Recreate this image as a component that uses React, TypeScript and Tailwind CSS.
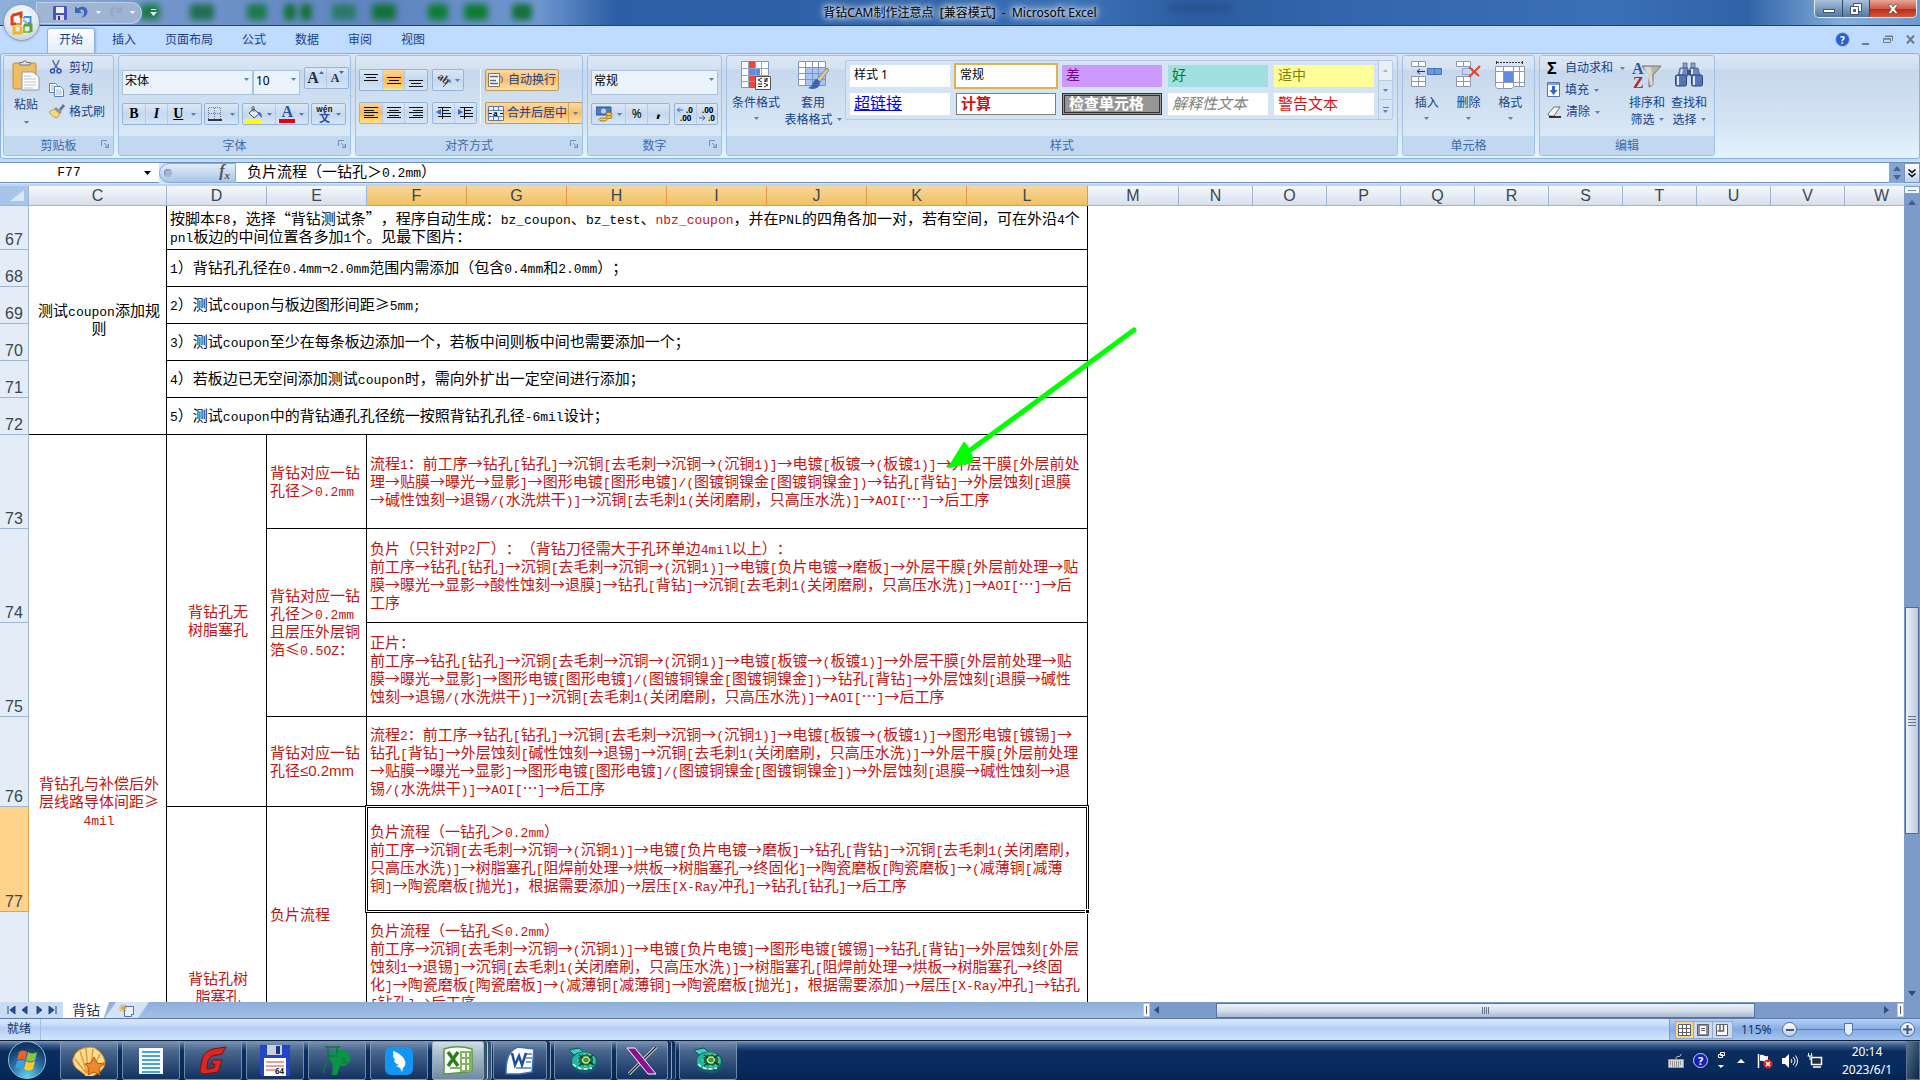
import type { ReactNode } from "react";
import clsx from "clsx";

const ui = "font-['Noto_Sans','Noto_Sans_CJK_SC',sans-serif]";
const song = "font-['Noto_Sans_CJK_SC',sans-serif] [text-spacing-trim:space-all]";

/* ---------- small helpers ---------- */

function Caret({ className }: { className?: string }) {
  return (
    <svg width="5" height="3" viewBox="0 0 5 3" className={clsx("shrink-0", className)}>
      <path d="M0 0h5L2.5 3z" fill="#5b7fb3" />
    </svg>
  );
}

// Latin runs are set in a fixed pitch face, everything else stays full width
function Mixed({ text }: { text: string }) {
  const parts = text.split(/([\x20-\x7e]+)/);
  return (
    <>
      {parts.map((p, i) =>
        i % 2 === 1 ? (
          <span key={i} className="font-['Liberation_Mono',monospace] text-[13px]">
            {p}
          </span>
        ) : (
          p
        )
      )}
    </>
  );
}

function Lines({ lines }: { lines: string[] }) {
  return (
    <>
      {lines.map((line, i) => (
        <div key={i} className="h-[18px] whitespace-pre">
          <Mixed text={line} />
        </div>
      ))}
    </>
  );
}

/* ---------- title bar ---------- */

const smudges = [
  "left-[140px] w-5 bg-[#1c7a4a]",
  "left-[190px] w-6 bg-[#1f6e50]",
  "left-[247px] w-5 bg-[#1c7a4a]",
  "left-[284px] w-3 bg-[#157038]",
  "left-[300px] w-3 bg-[#157038]",
  "left-[332px] w-6 bg-[#2a7a66]",
  "left-[372px] w-6 bg-[#157038]",
  "left-[428px] w-5 bg-[#0f7c35]",
  "left-[464px] w-6 bg-[#0f7c35]",
  "left-[512px] w-5 bg-[#157038]",
];

function TitleBar() {
  return (
    <header className="relative flex h-[26px] shrink-0 items-center overflow-hidden border-b border-[#1f4668] bg-[linear-gradient(90deg,#8fb0da_0%,#7596cc_8%,#5d84bf_20%,#6f97cf_28%,#2c5fa5_32%,#2f63a8_48%,#3c72b8_56%,#2b5ca0_62%,#3468ae_72%,#3a70b6_84%,#2f63a8_91%,#86aedb_96%,#6d9acc_100%)]">
      {smudges.map((s) => (
        <span key={s} className={clsx("absolute top-1 h-4 rounded-sm blur-[3px]", s)} />
      ))}
      <span className="absolute left-[1168px] top-1 h-2 w-16 bg-[#24487c] opacity-50 blur-[3px]" />
      <div className="relative ml-9 flex h-[22px] w-[106px] items-center rounded-r-full border border-[#c9dcf2]/70 bg-[#a3b7d3]/90 pl-4">
        <button aria-label="保存">
          <svg width="14" height="14" viewBox="0 0 14 14">
            <path d="M1 0h12l1 1v12l-1 1H1l-1-1V1z" fill="#4a54b8" />
            <path d="M3 1h8v6H3z" fill="#eef3fb" />
            <path d="M3 9h8v5H3z" fill="#d6dcea" />
            <path d="M5 10h2v4H5z" fill="#33397f" />
          </svg>
        </button>
        <button aria-label="撤消" className="ml-2">
          <svg width="13" height="13" viewBox="0 0 13 13">
            <path d="M0 0v7h7L4.500 4.500C7 2.500 9.500 4 9 7c0 2-1 3.500-3 5 4-1 6.500-3 6.500-6.500C12.500 1 6.500-1 2.500 2.500z" fill="#3c66c0" />
          </svg>
        </button>
        <svg width="5" height="3" className="ml-2"><path d="M0 0h5L2.500 3z" fill="#fff" /></svg>
        <button aria-label="恢复" className="ml-2">
          <svg width="13" height="13" viewBox="0 0 13 13" className="-scale-x-100 opacity-50">
            <path d="M0 0v7h7L4.500 4.500C7 2.500 9.500 4 9 7c0 2-1 3.500-3 5 4-1 6.500-3 6.500-6.500C12.500 1 6.500-1 2.500 2.500z" fill="#8b9fbd" />
          </svg>
        </button>
        <svg width="5" height="3" className="ml-2"><path d="M0 0h5L2.500 3z" fill="#fff" /></svg>
      </div>
      <svg width="7" height="7" viewBox="0 0 7 7" className="relative ml-2">
        <path d="M1 0h5v1H1zM0 3h7L3.500 7z" fill="#e8f0fa" />
      </svg>
      <h1 className="absolute inset-x-0 top-[5px] whitespace-pre text-center text-xs leading-4 text-black [text-shadow:0_0_5px_#fff,0_0_8px_#fff,0_0_10px_#dce8f8]">
        背钻CAM制作注意点  [兼容模式]  -  Microsoft Excel
      </h1>
      <div className="relative mr-[3px] ml-auto flex h-[18px] self-start overflow-hidden rounded-b-[5px] border border-t-0 border-[#e2edf8]">
        <button aria-label="最小化" className="flex w-7 items-end justify-center border-r border-[#2d4a73] bg-linear-to-b from-[#a9c1dd] to-[#54769f] pb-1">
          <span className="h-[4px] w-3 border border-[#3f5573] bg-white" />
        </button>
        <button aria-label="还原" className="flex w-[27px] items-center justify-center border-r border-[#2d4a73] bg-linear-to-b from-[#a9c1dd] to-[#54769f]">
          <svg width="12" height="12" viewBox="0 0 12 12">
            <path d="M3.500.5h8v8h-8z" fill="#fff" stroke="#3f5573" />
            <path d="M.5 3.500h8v8h-8z" fill="#fff" stroke="#3f5573" />
            <path d="M3.500 6.500h2v2h-2z" fill="#54769f" stroke="#3f5573" />
          </svg>
        </button>
        <button aria-label="关闭" className="flex w-[46px] items-center justify-center bg-[linear-gradient(#e6a79a,#cf5a46_50%,#b92b18_52%,#d4563c)]">
          <svg width="12" height="10" viewBox="0 0 12 10">
            <path d="M1 .5h3L6 3 8 .5h3L7.700 5 11 9.500H8L6 7 4 9.500H1L4.300 5z" fill="#fff" stroke="#5b4048" strokeWidth=".6" />
          </svg>
        </button>
      </div>
    </header>
  );
}

function OfficeButton() {
  return (
    <button aria-label="Office 按钮" className="absolute left-[3px] top-1 z-10 flex size-[37px] items-center justify-center rounded-full border border-[#8a9fba] bg-[radial-gradient(circle_at_50%_35%,#ffffff,#dfe7f1_55%,#b3c2d8)] shadow">
      <svg width="24" height="24" viewBox="0 0 24 24" fill="none">
        <path d="M2 4.500 11 2v5M2 4.500v8.500h4" stroke="#d9431e" strokeWidth="3" />
        <path d="M6 13h5V7" stroke="#ee8a3c" strokeWidth="2" />
        <path d="M14 6h6.500v6h-3" stroke="#3f8fd8" strokeWidth="2" />
        <path d="M14 6v5h4" stroke="#6db5ea" strokeWidth="2" strokeDasharray="2 1" />
        <path d="M4 15v7h7v-6" stroke="#f2b51d" strokeWidth="3" />
        <path d="M4 15h7" stroke="#f8d35a" strokeWidth="2" />
        <path d="M14 14v7h7" stroke="#8cc152" strokeWidth="2" />
        <path d="M14 14h7v7" stroke="#5f9e35" strokeWidth="3" />
      </svg>
    </button>
  );
}

const menuTabs = ["开始", "插入", "页面布局", "公式", "数据", "审阅", "视图"];

function TabStrip() {
  return (
    <nav className="flex h-[27px] shrink-0 items-end gap-[5px] bg-[#bfdbff] pl-[47px] pr-[5px]">
      {menuTabs.map((t, i) => (
        <button
          key={t}
          className={clsx(
            "h-[25px] px-3 pb-[2px] text-xs text-[#15428b]",
            i === 0 && "rounded-t-[3px] border border-b-0 border-[#8db2e3] bg-linear-to-b from-white to-[#e0ecf9] px-[11px] shadow-[1px_0_2px_#8db2e3]"
          )}
        >
          {t}
        </button>
      ))}
      <div className="ml-auto flex items-center gap-[13px] self-center">
        <button aria-label="帮助" className="flex size-[13px] items-center justify-center rounded-full bg-[#2a5fd0] text-[10px] font-bold leading-none text-white shadow-[0_0_0_1px_#9fc0ee]">
          ?
        </button>
        <svg width="8" height="11"><path d="M0 9h7v2H0z" fill="#6b7a8f" /></svg>
        <svg width="10" height="9" viewBox="0 0 10 9" fill="none" stroke="#6b7a8f">
          <path d="M2 1h7.500v5M.5 3.500h7v4h-7zM.5 4.200h7M2 1.500h7" />
        </svg>
        <svg width="9" height="9" viewBox="0 0 9 9"><path d="M1 .5 8 8.500M8 .5 1 8.500" stroke="#6b7a8f" strokeWidth="2" /></svg>
      </div>
    </nav>
  );
}

/* ---------- ribbon ---------- */

function Group({ label, width, launcher = true, children }: { label: string; width: string; launcher?: boolean; children: ReactNode }) {
  return (
    <section className={clsx("flex h-[101px] shrink-0 flex-col overflow-hidden rounded-[3px] border border-[#a3c1e0] bg-[linear-gradient(#dee8f5_0,#d3e1f1_13px,#c7d8ed_14px,#d8e8f5_80px)]", width)}>
      <div className="h-20 px-[3px]">{children}</div>
      <div className="relative flex h-[19px] items-center justify-center bg-[#c1d8f0] text-xs text-[#3e6aaa]">
        {label}
        {launcher && (
          <svg width="8" height="8" viewBox="0 0 8 8" className="absolute right-1 top-1" fill="none" stroke="#6f8fba">
            <path d="M.5 6V.5H6M3 3l3 3" />
            <path d="M4 7.500h3.500V4" strokeWidth="1.500" />
          </svg>
        )}
      </div>
    </section>
  );
}

function BtnBar({ children, className }: { children: ReactNode; className?: string }) {
  return (
    <div className={clsx("flex h-[22px] shrink-0 divide-x divide-[#b4cae6] overflow-hidden rounded-[2px] border border-[#94b4dc] bg-linear-to-b from-[#dce8f6] via-[#c5d8ef] to-[#d6e5f5]", className)}>
      {children}
    </div>
  );
}

function Btn({ label, active, className, children }: { label: string; active?: boolean; className?: string; children: ReactNode }) {
  return (
    <button aria-label={label} className={clsx("flex flex-1 items-center justify-center gap-1", active && "bg-linear-to-b from-[#fbd59a] via-[#fdb94e] to-[#fee08c]", className)}>
      {children}
    </button>
  );
}

function Bars({ d }: { d: string }) {
  return (
    <svg width="14" height="14" viewBox="0 0 14 14">
      <path d={d} stroke="#111" strokeWidth="1" fill="none" />
    </svg>
  );
}

function Combo({ value, label, width }: { value: string; label: string; width: string }) {
  return (
    <div className={clsx("relative h-[25px] shrink-0", width)}>
      <select aria-label={label} defaultValue={value} className="h-full w-full appearance-none border border-[#abc1de] bg-[#eaf2fb] pb-[2px] pl-[2px] text-xs text-black">
        <option>{value}</option>
      </select>
      <Caret className="pointer-events-none absolute right-1 top-[11px]" />
    </div>
  );
}

function ClipboardGroup() {
  return (
    <Group label="剪贴板" width="w-[111px]">
      <div className="flex gap-1 pt-1">
        <button className="flex w-[38px] shrink-0 flex-col items-center text-xs text-[#15428b]">
          <svg width="28" height="31" viewBox="0 0 28 31">
            <rect x="1" y="3" width="23" height="26" rx="1.500" fill="#eebf62" stroke="#c08f3c" />
            <path d="M8 5V2.500h3a1.500 1.500 0 0 1 3.500 0H18V5z" fill="#e4e8ee" stroke="#6b7280" />
            <path d="M10 12h11l6 5v13H10z" fill="#fff" stroke="#8a97ab" />
            <path d="M12 16h7M12 19h12M12 22h12M12 25h12M12 28h9" stroke="#b9c3d2" />
          </svg>
          <span className="mt-[6px]">粘贴</span>
          <Caret className="mt-2" />
        </button>
        <div className="flex flex-col whitespace-nowrap text-xs leading-4 text-[#15428b]">
          <button className="flex h-[22px] items-start gap-[6px]">
            <svg width="14" height="15" viewBox="0 0 14 15" fill="none">
              <path d="M4 0c0 3 3 6 5 9M10 0C9 4 7 6 5 9" stroke="#5672a5" strokeWidth="1.500" />
              <circle cx="3.500" cy="11" r="2" stroke="#2c57a8" strokeWidth="1.500" />
              <circle cx="10" cy="11" r="2" stroke="#2c57a8" strokeWidth="1.500" />
            </svg>
            剪切
          </button>
          <button className="flex h-[22px] items-start gap-[5px]">
            <svg width="15" height="15" viewBox="0 0 15 15" fill="#fff" stroke="#5c7fc0">
              <path d="M.5 1.500h6l2 2v7h-8z" />
              <path d="M2 4h4M2 6h4M2 8h4" stroke="#9bb2de" />
              <path d="M5.500 4.500h6l3 3v7h-9z" />
              <path d="M7 8h5M7 10h6M7 12h6" stroke="#9bb2de" />
            </svg>
            复制
          </button>
          <button className="flex items-start gap-[4px]">
            <svg width="16" height="15" viewBox="0 0 16 15">
              <path d="M10 5 14 0l2 2-4 5z" fill="#6d7486" />
              <path d="m7 3 6 5-2 2-6-5z" fill="#8993ae" />
              <path d="M5 5 0 8c2 3 4 5 8 6l3-4z" fill="#f1dc77" stroke="#a98c2e" strokeWidth=".7" />
            </svg>
            格式刷
          </button>
        </div>
      </div>
    </Group>
  );
}

function FontGroup() {
  return (
    <Group label="字体" width="w-[233px]">
      <div className="flex pt-[11px]">
        <Combo value="宋体" label="字体" width="w-[131px]" />
        <Combo value="10" label="字号" width="w-[47px]" />
        <BtnBar className="ml-1 w-[45px]">
          <Btn label="增大字号">
            <span className="flex items-start font-['Liberation_Serif',serif] text-base font-bold leading-5 text-[#26303f]">
              A<svg width="5" height="3" className="mt-[3px]"><path d="M0 3h5L2.500 0z" fill="#3b68b5" /></svg>
            </span>
          </Btn>
          <Btn label="减小字号">
            <span className="flex items-start font-['Liberation_Serif',serif] text-xs font-bold leading-5 text-[#26303f]">
              A<svg width="5" height="3" className="mt-[3px]"><path d="M0 0h5L2.500 3z" fill="#3b68b5" /></svg>
            </span>
          </Btn>
        </BtnBar>
      </div>
      <div className="flex justify-between pr-[1px] pt-[11px] font-['Liberation_Serif',serif] text-sm text-black">
        <BtnBar className="w-20">
          <Btn label="加粗"><b>B</b></Btn>
          <Btn label="倾斜"><i className="font-bold">I</i></Btn>
          <Btn label="下划线" className="grow-[1.5]"><b className="mr-1 underline">U</b><Caret /></Btn>
        </BtnBar>
        <BtnBar className="w-[35px]">
          <Btn label="边框">
            <svg width="14" height="14" viewBox="0 0 14 14" className="mr-1">
              <path d="M.5 1v11M6.500 1v11M12.500 1v11M1 .5h12M1 6.500h12" stroke="#6b7890" strokeDasharray="1 1" />
              <path d="M0 13h14" stroke="#000" strokeWidth="1.500" />
            </svg>
            <Caret />
          </Btn>
        </BtnBar>
        <BtnBar className="w-[67px]">
          <Btn label="填充颜色">
            <svg width="17" height="17" viewBox="0 0 17 17">
              <path d="m3 7 5-4 5 5-5 4z" fill="#e9eef6" stroke="#47536b" />
              <path d="M8 6V1.500C8 0 6 0 6 2v3" fill="none" stroke="#47536b" />
              <path d="M12 6c3 0 4 2 4 6-2-1-2-3-4-3z" fill="#3d6fc2" />
              <path d="M0 13h16v4H0z" fill="#ff0" />
            </svg>
            <Caret />
          </Btn>
          <Btn label="字体颜色">
            <span className="flex w-4 flex-col items-center text-base font-bold leading-[13px] text-[#2f539b]">A<span className="mt-px h-1 w-4 bg-red-600" /></span>
            <Caret />
          </Btn>
        </BtnBar>
        <BtnBar className="w-[35px]">
          <Btn label="拼音">
            <svg width="17" height="18" viewBox="0 0 17 18" className="-mr-px" fontFamily="Noto Sans CJK SC">
              <text x="0" y="7" fontSize="8" fontWeight="bold" fill="#222">wén</text>
              <text x="3" y="17" fontSize="11" fontWeight="bold" fill="#2a4bb0">文</text>
            </svg>
            <Caret />
          </Btn>
        </BtnBar>
      </div>
    </Group>
  );
}

const orange = "rounded-[2px] border border-[#b99a62] bg-linear-to-b from-[#fcd8a4] via-[#fbbd66] to-[#fde0a0]";

function AlignGroup() {
  return (
    <Group label="对齐方式" width="w-[228px]">
      <div className="flex">
        <div className="flex w-[121px] shrink-0 flex-col gap-[11px] pt-[13px]">
          <div className="flex gap-1">
            <BtnBar className="w-[69px]">
              <Btn label="顶端对齐"><Bars d="M0 1.500h14M2 4.500h10M0 7.500h14" /></Btn>
              <Btn label="垂直居中" active><Bars d="M0 4.500h14M2 7.500h10M0 10.500h14" /></Btn>
              <Btn label="底端对齐"><Bars d="M0 7.500h14M2 10.500h10M0 13.500h14" /></Btn>
            </BtnBar>
            <BtnBar className="w-8">
              <Btn label="方向">
                <svg width="15" height="15" viewBox="0 0 15 15">
                  <text x="0" y="8" fontSize="11" fontWeight="bold" fontFamily="Liberation Serif" fill="#333" transform="rotate(38 5 8)">ab</text>
                  <path d="m7 14 7-7M11 7h3v3" stroke="#555" fill="none" />
                </svg>
                <Caret />
              </Btn>
            </BtnBar>
          </div>
          <div className="flex gap-1">
            <BtnBar className="w-[69px]">
              <Btn label="左对齐" active><Bars d="M0 1.500h14M0 4.500h10M0 6.500h14M0 9.500h10M0 11.500h14" /></Btn>
              <Btn label="居中"><Bars d="M0 1.500h14M2 4.500h10M0 6.500h14M2 9.500h10M0 11.500h14" /></Btn>
              <Btn label="右对齐"><Bars d="M0 1.500h14M4 4.500h10M0 6.500h14M4 9.500h10M0 11.500h14" /></Btn>
            </BtnBar>
            <BtnBar className="w-[45px]">
              <Btn label="减少缩进">
                <svg width="15" height="14" viewBox="0 0 15 14"><path d="M2 1.500h13M7 4.500h6M7 7.500h8M2 10.500h13M6.500 13v-12" stroke="#111" /><path d="M5 3v6L0 6z" fill="#3b68c5" /></svg>
              </Btn>
              <Btn label="增加缩进">
                <svg width="15" height="14" viewBox="0 0 15 14"><path d="M2 1.500h13M7 4.500h6M7 7.500h8M2 10.500h13M6.500 13v-12" stroke="#111" /><path d="M0 3v6l5-3z" fill="#3b68c5" /></svg>
              </Btn>
            </BtnBar>
          </div>
        </div>
        <div className="mt-[13px] flex flex-col items-start gap-[11px] whitespace-nowrap border-l border-[#f2f7fd] pl-1 text-xs text-[#15428b]">
          <button className={clsx("flex h-[22px] items-center gap-1 px-[2px]", orange)}>
            <svg width="16" height="16" viewBox="0 0 16 16">
              <path d="M.5 1.500h11v13H.5z" fill="#fff" stroke="#7d7463" />
              <path d="M2 4.500h8M2 8.500h6M2 11.500h8" stroke="#5f6675" strokeWidth="1.500" />
              <path d="M12 4c3 0 3 6 1 7" stroke="#3a64a8" fill="none" />
            </svg>
            自动换行
          </button>
          <button className={clsx("flex h-[22px] items-center gap-[3px] pl-[2px] pr-1", orange)}>
            <svg width="16" height="15" viewBox="0 0 16 15">
              <path d="M.5.5h15v14H.5zM.5 4.500h15M.5 10.500h15M5.500 0v4M10.500 0v4M5.500 11v4M10.500 11v4" fill="#e7eef8" stroke="#5f7ca8" />
              <text x="5" y="10" fontSize="9" fontWeight="bold" fontFamily="Liberation Serif">a</text>
              <path d="M1 7.500h3M12 7.500h3" stroke="#111" />
            </svg>
            合并后居中
            <span className="-ml-[2px] flex h-full items-center border-l border-[#d9a456] pl-1"><Caret /></span>
          </button>
        </div>
      </div>
    </Group>
  );
}

function NumberGroup() {
  return (
    <Group label="数字" width="w-[135px]">
      <div className="pt-[11px]">
        <Combo value="常规" label="数字格式" width="w-[127px]" />
      </div>
      <div className="flex gap-1 pt-[11px] text-black">
        <BtnBar className="w-[79px]">
          <Btn label="会计数字格式" className="grow-[1.6]">
            <svg width="17" height="16" viewBox="0 0 17 16">
              <path d="M0 1h15v8H0z" fill="#4d7ab8" stroke="#30598f" />
              <circle cx="7.500" cy="5" r="2.500" fill="#bcd3ef" />
              <ellipse cx="13" cy="8" rx="3" ry="1.500" fill="#f7cf56" stroke="#a87b17" />
              <ellipse cx="13" cy="11" rx="3" ry="1.500" fill="#f7cf56" stroke="#a87b17" />
              <ellipse cx="7" cy="13.500" rx="4" ry="1.500" fill="#f7cf56" stroke="#a87b17" />
            </svg>
            <Caret />
          </Btn>
          <Btn label="百分比样式"><span className="text-xs">%</span></Btn>
          <Btn label="千位分隔样式"><b className="pb-2 text-lg leading-none">,</b></Btn>
        </BtnBar>
        <BtnBar className="w-[44px]">
          <Btn label="增加小数位数">
            <svg width="16" height="16" viewBox="0 0 16 16" fontSize="8" fontWeight="bold">
              <text x="9" y="7">.0</text>
              <text x="3" y="15">.00</text>
              <path d="M0 4h6M3 1.500.5 4 3 6.500" stroke="#3566c0" fill="none" />
            </svg>
          </Btn>
          <Btn label="减少小数位数">
            <svg width="16" height="16" viewBox="0 0 16 16" fontSize="8" fontWeight="bold">
              <text x="3" y="7">.00</text>
              <text x="9" y="15">.0</text>
              <path d="M0 12h6M3.500 9.500 6 12l-2.500 2.500" stroke="#3566c0" fill="none" />
            </svg>
          </Btn>
        </BtnBar>
      </div>
    </Group>
  );
}

const styleCells = [
  { name: "样式 1", cls: "bg-white text-black text-xs" },
  { name: "常规", cls: "bg-white text-black text-xs outline-2 outline-[#e3b04b]" },
  { name: "差", cls: "bg-[#cc99ff] text-[#800080] text-sm" },
  { name: "好", cls: "bg-[#a0e0e0] text-[#008000] text-sm" },
  { name: "适中", cls: "bg-[#ffff99] text-[#808000] text-sm" },
  { name: "超链接", cls: "bg-white text-[#0000ee] text-base underline" },
  { name: "计算", cls: "bg-white text-[#cc1111] text-[15px] font-bold border border-[#7f7f7f]" },
  { name: "检查单元格", cls: "bg-[#969696] text-white text-[15px] font-bold border-3 border-double border-[#333]" },
  { name: "解释性文本", cls: "bg-white text-[#808080] text-[15px] italic" },
  { name: "警告文本", cls: "bg-white text-[#dd1111] text-[15px]" },
];

function BigButton({ icon, lines, width, caretInline }: { icon: ReactNode; lines: string[]; width: string; caretInline?: boolean }) {
  return (
    <button className={clsx("flex flex-col items-center pt-[5px] text-xs leading-[17px] text-[#15428b]", width)}>
      <span className="flex h-[33px] items-start">{icon}</span>
      {lines.map((l, i) => (
        <span key={l} className="flex items-center gap-1 whitespace-nowrap">
          {l}
          {caretInline && i === lines.length - 1 && <Caret />}
        </span>
      ))}
      {!caretInline && <Caret className="mt-[6px]" />}
    </button>
  );
}

function StylesGroup() {
  return (
    <Group label="样式" width="w-[672px]" launcher={false}>
      <div className="flex">
        <BigButton
          width="w-[52px]"
          lines={["条件格式"]}
          icon={
            <svg width="31" height="29" viewBox="0 0 31 29">
              <path d="M.5.5h27v26H.5z" fill="#fff" stroke="#7d96bd" />
              <path d="M7 0h7v7H7zM7 14h7v7H7zM7 21h7v6H7z" fill="#e8493a" />
              <path d="M7 7h12v7H7z" fill="#5f8be0" />
              <path d="M7.500 0v27M14.500 0v27M20.500 0v27M0 7.500h28M0 14.500h28M0 20.500h28" stroke="#8fa6c8" />
              <path d="M14.500 15.500h15v13h-15z" fill="#fff" stroke="#555" />
              <path d="m21 17-4 2 4 2M17 23h4M23 18h4M23 20h4M26 17l-2 4M23 22l4 2-4 2M17 25.500h4" stroke="#222" fill="none" />
            </svg>
          }
        />
        <BigButton
          width="w-[62px]"
          lines={["套用", "表格格式"]}
          caretInline
          icon={
            <svg width="31" height="30" viewBox="0 0 31 30">
              <path d="M.5.5h27v24H.5z" fill="#fff" />
              <path d="M7 7h21v18H7z" fill="#a9c4f3" />
              <path d="M.5.5h27v24H.5zM7.500 0v25M14.500 0v25M20.500 0v25M0 6.500h28M0 12.500h28M0 18.500h28" stroke="#7d96bd" fill="none" />
              <path d="M29 7 31 9 22 21l-3-3z" fill="#d6c79d" stroke="#6e6a62" strokeWidth=".7" />
              <path d="M19 18c-5 1-3 7-9 9 6 2 12 1 12-6z" fill="#3c66b5" />
            </svg>
          }
        />
        <div className="mt-1 ml-px flex h-[60px] rounded-[2px] border border-[#b4cbe8] bg-[#d4e4f5]">
          <div className="grid grid-cols-5 gap-[6px] p-1">
            {styleCells.map((s) => (
              <button key={s.name} className={clsx("flex h-[22px] w-[100px] items-center overflow-hidden whitespace-nowrap pb-[2px] pl-1 text-left leading-5", s.cls)}>
                {s.name}
              </button>
            ))}
          </div>
          <div className="flex w-[14px] flex-col divide-y divide-[#b4cbe8] border-l border-[#b4cbe8]">
            <button aria-label="向上" className="flex flex-1 items-center justify-center bg-[#eaeff5]"><Caret className="rotate-180 opacity-50" /></button>
            <button aria-label="向下" className="flex flex-1 items-center justify-center"><Caret /></button>
            <button aria-label="其他" className="flex flex-1 flex-col items-center justify-center gap-[2px]"><span className="h-px w-[6px] bg-[#5b7fb3]" /><Caret /></button>
          </div>
        </div>
      </div>
    </Group>
  );
}

function CellsGroup() {
  return (
    <Group label="单元格" width="w-[133px]" launcher={false}>
      <div className="flex">
        <BigButton
          width="w-[42px]"
          lines={["插入"]}
          icon={
            <svg width="31" height="27" viewBox="0 0 31 27" fill="#fff" stroke="#8d99ad">
              <path d="M.5.5h14v5H.5zM7.500.5v5M.5 15.500h14v10H.5zM7.500 15.500v10M.5 20.500h14" />
              <path d="M16.500 7.500h14v6h-14zM23.500 7.500v6" fill="#6e97e0" stroke="#4a70b8" />
              <path d="M6 10.500h8M9 8l-3 2.500L9 13" fill="none" stroke="#333" />
            </svg>
          }
        />
        <BigButton
          width="w-[42px]"
          lines={["删除"]}
          icon={
            <svg width="25" height="27" viewBox="0 0 25 27" fill="#fff" stroke="#8d99ad">
              <path d="M.5.5h14v5H.5zM7.500.5v5M.5 15.500h14v10H.5zM7.500 15.500v10M.5 20.500h14" />
              <path d="M6.500 7.500h10v6h-10z" fill="none" stroke="#4a70b8" strokeDasharray="1 1" />
              <path d="m13 6 10 9M24 5 13 16" stroke="#e2432d" strokeWidth="2" />
            </svg>
          }
        />
        <BigButton
          width="w-[42px]"
          lines={["格式"]}
          icon={
            <svg width="31" height="29" viewBox="0 0 31 29">
              <path d="M.5 5.500h29v20H19l-2 2H2l-1.500-2z" fill="#fff" stroke="#8d99ad" />
              <path d="M8 10h10v11H8z" fill="#5f8be0" />
              <path d="M8.500 5v22M18.500 5v20M24.500 5v20M0 10.500h30M0 21.500h30" stroke="#8d99ad" />
              <path d="M1.500 0v3M27.500 0v3" stroke="#333" />
              <path d="M2 1.500h25" stroke="#333" strokeDasharray="2 1" />
            </svg>
          }
        />
      </div>
    </Group>
  );
}

function EditGroup() {
  return (
    <Group label="编辑" width="w-[176px]" launcher={false}>
      <div className="flex">
        <div className="flex w-[83px] flex-col pl-1 pt-1 text-xs leading-4 text-[#15428b]">
          <button className="flex h-[22px] items-start gap-2 whitespace-nowrap"><b className="w-[10px] text-base leading-4 text-black">Σ</b>自动求和<Caret className="mt-[7px] -ml-px" /></button>
          <button className="flex h-[22px] items-start gap-[5px]">
            <svg width="13" height="15" viewBox="0 0 13 15"><path d="M.5.5h12v14H.5z" fill="#fff" stroke="#5674a8" /><path d="M1 1h11v2H1z" fill="#7ea0dc" /><path d="M5 4h3v4h2.500l-4 5-4-5H5z" fill="#3567c8" /></svg>
            填充<Caret className="mt-[7px]" />
          </button>
          <button className="flex items-start gap-[5px]">
            <svg width="14" height="15" viewBox="0 0 14 15"><path d="m1 10 6-7h6l-6 9H2z" fill="#f6f6f8" stroke="#6a6f7c" /><path d="M2 13h12" stroke="#000" strokeWidth="1.500" /></svg>
            清除<Caret className="mt-[7px]" />
          </button>
        </div>
        <BigButton
          width="w-[42px]"
          lines={["排序和", "筛选"]}
          caretInline
          icon={
            <svg width="30" height="29" viewBox="0 0 30 29">
              <text x="0" y="13" fontSize="16" fontWeight="bold" fontFamily="Liberation Serif" fill="#2a56a8">A</text>
              <text x="1" y="27" fontSize="16" fontWeight="bold" fontFamily="Liberation Serif" fill="#a33327">Z</text>
              <path d="M10 5h19l-8 9v10l-4 2V14z" fill="#b9b6ae" stroke="#77736a" />
              <path d="M12 6h7l2 18-2 1z" fill="#e9e7e1" opacity=".7" />
            </svg>
          }
        />
        <BigButton
          width="w-[42px]"
          lines={["查找和", "选择"]}
          caretInline
          icon={
            <svg width="28" height="27" viewBox="0 0 28 27">
              <path d="M8 2h4v5H8zM16 2h4v5h-4z" fill="#8fa4c8" stroke="#3f5a8c" strokeWidth=".7" />
              <path d="M5 7h8v8H3zM15 7h8l2 8H15z" fill="#6d89bd" stroke="#3a5182" strokeWidth=".7" />
              <rect x=".5" y="14" width="11" height="11" rx="1.500" fill="#5676b3" stroke="#2f4778" />
              <rect x="16.500" y="14" width="11" height="11" rx="1.500" fill="#5676b3" stroke="#2f4778" />
              <path d="M12 9h4v5h-4z" fill="#3a5182" />
              <path d="M3 15v9M19 15v9M7 8l-1 5M17 8v5" stroke="#dbe6f8" strokeWidth="2" />
            </svg>
          }
        />
      </div>
    </Group>
  );
}

function Ribbon() {
  return (
    <div className="flex h-[109px] shrink-0 bg-[#bfdbff]">
      <div className="flex h-[106px] min-w-0 flex-1 gap-1 overflow-hidden rounded-[3px] border border-[#8db2e3] bg-[linear-gradient(#dbe6f4_0,#cfdef0_15px,#c7d8ed_16px,#d5e4f3_70px,#e3f4ff_100%)] pl-[2px] pt-px">
        <ClipboardGroup />
        <FontGroup />
        <AlignGroup />
        <NumberGroup />
        <StylesGroup />
        <CellsGroup />
        <EditGroup />
      </div>
    </div>
  );
}

function FormulaBar() {
  return (
    <div className="flex h-6 shrink-0 border-b-2 border-t border-[#bcd5f2] border-t-[#6f8fb8] bg-[#d5e5f7] text-sm text-black">
      <div className="flex h-5 w-[159px] items-center border-b border-[#6f8fb8] bg-white pr-2">
        <input aria-label="名称框" defaultValue="F77" className="w-[138px] min-w-0 pt-[2px] text-center font-['Liberation_Mono',monospace] text-[13px] outline-none" />
        <svg width="7" height="4" className="ml-auto"><path d="M0 0h7L3.500 4z" fill="#000" /></svg>
      </div>
      <div className="flex h-5 w-[77px] items-center rounded-l-full border border-[#8aa8d0] bg-linear-to-b from-[#e2eefb] to-[#a9c5e8] pl-1 pr-[5px]">
        <span className="size-2 rounded-full bg-[#a5b8d0] shadow-[inset_1px_1px_1px_#7f95b3]" />
        <button className="ml-auto pb-1 font-['Liberation_Serif',serif] text-base font-bold italic leading-none text-[#555]">f<sub className="text-[11px]">x</sub></button>
      </div>
      <div className={clsx("flex h-5 min-w-0 flex-1 items-center border-b border-[#6f8fb8] bg-white pl-[11px] text-[15px]", song)}>
        <span className="whitespace-pre leading-[18px]"><Mixed text="负片流程（一钻孔＞0.2mm）" /></span>
      </div>
      <div className="flex h-5 w-[15px] flex-col items-center justify-center gap-1 bg-[#86a5d2]">
        <svg width="8" height="5"><path d="M0 5h8L4 0z" fill="#47648f" /></svg>
        <svg width="8" height="5"><path d="M0 0h8L4 5z" fill="#47648f" /></svg>
      </div>
      <button aria-label="展开编辑栏" className="flex h-5 w-4 items-center justify-center border border-[#7795c0] bg-linear-to-b from-white to-[#bed4f0]">
        <svg width="8" height="9" viewBox="0 0 8 9" fill="none" stroke="#000" strokeWidth="1.500"><path d="m.5.5 3.500 3 3.500-3M.5 4.500l3.500 3 3.500-3" /></svg>
      </button>
    </div>
  );
}

/* ---------- sheet ---------- */

const columns: [string, string][] = [
  ["C", "w-[138px]"],
  ["D", "w-[100px]"],
  ["E", "w-[100px]"],
  ["F", "w-[100px]"],
  ["G", "w-[100px]"],
  ["H", "w-[100px]"],
  ["I", "w-[100px]"],
  ["J", "w-[100px]"],
  ["K", "w-[100px]"],
  ["L", "w-[121px]"],
  ["M", "w-[91px]"],
  ["N", "w-[74px]"],
  ["O", "w-[74px]"],
  ["P", "w-[74px]"],
  ["Q", "w-[74px]"],
  ["R", "w-[74px]"],
  ["S", "w-[74px]"],
  ["T", "w-[74px]"],
  ["U", "w-[74px]"],
  ["V", "w-[74px]"],
  ["W", ""],
];

const rules = [
  "1）背钻孔孔径在0.4mm¬2.0mm范围内需添加（包含0.4mm和2.0mm）；",
  "2）测试coupon与板边图形间距≥5mm;",
  "3）测试coupon至少在每条板边添加一个，若板中间则板中间也需要添加一个；",
  "4）若板边已无空间添加测试coupon时，需向外扩出一定空间进行添加；",
  "5）测试coupon中的背钻通孔孔径统一按照背钻孔孔径-6mil设计；",
];

const flow = {
  r73: [
    "流程1：前工序→钻孔[钻孔]→沉铜[去毛刺→沉铜→(沉铜1)]→电镀[板镀→(板镀1)]→外层干膜[外层前处",
    "理→贴膜→曝光→显影]→图形电镀[图形电镀]/(图镀铜镍金[图镀铜镍金])→钻孔[背钻]→外层蚀刻[退膜",
    "→碱性蚀刻→退锡/(水洗烘干)]→沉铜[去毛刺1(关闭磨刷，只高压水洗)]→AOI[⋯]→后工序",
  ],
  r74: [
    "负片（只针对P2厂）：（背钻刀径需大于孔环单边4mil以上）：",
    "前工序→钻孔[钻孔]→沉铜[去毛刺→沉铜→(沉铜1)]→电镀[负片电镀→磨板]→外层干膜[外层前处理→贴",
    "膜→曝光→显影→酸性蚀刻→退膜]→钻孔[背钻]→沉铜[去毛刺1(关闭磨刷，只高压水洗)]→AOI[⋯]→后",
    "工序",
  ],
  r75: [
    "正片：",
    "前工序→钻孔[钻孔]→沉铜[去毛刺→沉铜→(沉铜1)]→电镀[板镀→(板镀1)]→外层干膜[外层前处理→贴",
    "膜→曝光→显影]→图形电镀[图形电镀]/(图镀铜镍金[图镀铜镍金])→钻孔[背钻]→外层蚀刻[退膜→碱性",
    "蚀刻→退锡/(水洗烘干)]→沉铜[去毛刺1(关闭磨刷，只高压水洗)]→AOI[⋯]→后工序",
  ],
  r76: [
    "流程2：前工序→钻孔[钻孔]→沉铜[去毛刺→沉铜→(沉铜1)]→电镀[板镀→(板镀1)]→图形电镀[镀锡]→",
    "钻孔[背钻]→外层蚀刻[碱性蚀刻→退锡]→沉铜[去毛刺1(关闭磨刷，只高压水洗)]→外层干膜[外层前处理",
    "→贴膜→曝光→显影]→图形电镀[图形电镀]/(图镀铜镍金[图镀铜镍金])→外层蚀刻[退膜→碱性蚀刻→退",
    "锡/(水洗烘干)]→AOI[⋯]→后工序",
  ],
  r77: [
    "负片流程（一钻孔＞0.2mm）",
    "前工序→沉铜[去毛刺→沉铜→(沉铜1)]→电镀[负片电镀→磨板]→钻孔[背钻]→沉铜[去毛刺1(关闭磨刷，",
    "只高压水洗)]→树脂塞孔[阻焊前处理→烘板→树脂塞孔→终固化]→陶瓷磨板[陶瓷磨板]→(减薄铜[减薄",
    "铜]→陶瓷磨板[抛光]，根据需要添加)→层压[X-Ray冲孔]→钻孔[钻孔]→后工序",
  ],
  r78: [
    "负片流程（一钻孔≤0.2mm）",
    "前工序→沉铜[去毛刺→沉铜→(沉铜1)]→电镀[负片电镀]→图形电镀[镀锡]→钻孔[背钻]→外层蚀刻[外层",
    "蚀刻1→退锡]→沉铜[去毛刺1(关闭磨刷，只高压水洗)]→树脂塞孔[阻焊前处理→烘板→树脂塞孔→终固",
    "化]→陶瓷磨板[陶瓷磨板]→(减薄铜[减薄铜]→陶瓷磨板[抛光]，根据需要添加)→层压[X-Ray冲孔]→钻孔",
    "[钻孔]→后工序",
  ],
};

const cell = "border-b border-r border-black pb-[2px] pl-[3px] align-middle";
const red = "text-[#c41414]";

function RowHead({ n, active }: { n: number; active?: boolean }) {
  return (
    <th
      scope="row"
      className={clsx(
        "border-b border-r align-bottom font-['Liberation_Sans',sans-serif] text-base font-normal leading-[18px] text-[#39474f]",
        active ? "border-[#e8a04c] bg-[#ffd38c]" : "border-[#9eb6ce] bg-[#e4ecf7]"
      )}
    >
      {n}
    </th>
  );
}

function Sheet() {
  return (
    <div className="relative min-w-0 flex-1 overflow-hidden bg-white">
      <table lang="zh-CN" className={clsx("w-full min-w-[1919px] table-fixed border-separate border-spacing-0 text-[15px] leading-[18px] text-black", song)}>
        <thead>
          <tr className="h-5 font-['Liberation_Sans',sans-serif] text-base leading-[18px]">
            <th className="relative w-[29px] border-b border-r border-[#9eb6ce] bg-[#a9c4e9] p-0">
              <svg width="14" height="11" className="absolute bottom-1 right-1"><path d="M14 0v11H0z" fill="#dbe7f6" /></svg>
            </th>
            {columns.map(([name, width]) => {
              const active = name >= "F" && name <= "L";
              return (
                <th
                  key={name}
                  scope="col"
                  className={clsx(
                    "border-b border-r p-0 font-normal text-[#39474f]",
                    width,
                    active ? "border-[#e8964a] bg-linear-to-b from-[#f8d69c] to-[#f1c05f]" : "border-[#9eb6ce] bg-linear-to-b from-[#f6f9fc] to-[#d6dfeb]"
                  )}
                >
                  {name}
                </th>
              );
            })}
          </tr>
        </thead>
        <tbody>
          <tr className="h-[44px]">
            <RowHead n={67} />
            <td rowSpan={6} className={clsx(cell, "text-center")}>
              <Lines lines={["测试coupon添加规", "则"]} />
            </td>
            <td colSpan={9} className={clsx(cell, "whitespace-pre")}>
              <div className="h-[18px]">
                <Mixed text="按脚本F8，选择“背钻测试条”，程序自动生成：bz_coupon、bz_test、" />
                <span className={red}><Mixed text="nbz_coupon" /></span>
                <Mixed text="，并在PNL的四角各加一对，若有空间，可在外沿4个" />
              </div>
              <Lines lines={["pnl板边的中间位置各多加1个。见最下图片："]} />
            </td>
            <td colSpan={11} />
          </tr>
          {rules.map((r, i) => (
            <tr key={r} className="h-[37px]">
              <RowHead n={68 + i} />
              <td colSpan={9} className={cell}><Lines lines={[r]} /></td>
              <td colSpan={11} />
            </tr>
          ))}
          <tr className={clsx("h-[94px]", red)}>
            <RowHead n={73} />
            <td rowSpan={7} className={clsx(cell, "text-center")}>
              <Lines lines={["背钻孔与补偿后外", "层线路导体间距≥", "4mil"]} />
            </td>
            <td rowSpan={4} className={clsx(cell, "text-center")}><Lines lines={["背钻孔无", "树脂塞孔"]} /></td>
            <td className={cell}><Lines lines={["背钻对应一钻", "孔径＞0.2mm"]} /></td>
            <td colSpan={7} className={cell}><Lines lines={flow.r73} /></td>
            <td colSpan={11} />
          </tr>
          <tr className={clsx("h-[94px]", red)}>
            <RowHead n={74} />
            <td rowSpan={2} className={cell}>
              <Lines lines={["背钻对应一钻", "孔径＞0.2mm", "且层压外层铜", "箔≤0.5OZ："]} />
            </td>
            <td colSpan={7} className={cell}><Lines lines={flow.r74} /></td>
            <td colSpan={11} />
          </tr>
          <tr className={clsx("h-[94px]", red)}>
            <RowHead n={75} />
            <td colSpan={7} className={cell}><Lines lines={flow.r75} /></td>
            <td colSpan={11} />
          </tr>
          <tr className={clsx("h-[90px]", red)}>
            <RowHead n={76} />
            <td className={cell}>
              <div className="h-[18px]">背钻对应一钻</div>
              <div className="h-[18px]">孔径<span className="font-['Liberation_Sans',sans-serif]">≤0.2mm</span></div>
            </td>
            <td colSpan={7} className={cell}><Lines lines={flow.r76} /></td>
            <td colSpan={11} />
          </tr>
          <tr className={clsx("h-[105px]", red)}>
            <RowHead n={77} active />
            <td rowSpan={3} className={clsx(cell, "text-center")}><Lines lines={["背钻孔树", "脂塞孔"]} /></td>
            <td rowSpan={2} className={cell}>负片流程</td>
            <td colSpan={7} className={clsx(cell, "relative")}>
              <Lines lines={flow.r77} />
              <span className="pointer-events-none absolute -bottom-[2px] -left-[2px] -right-[2px] -top-[2px] border border-black shadow-[inset_0_0_0_1px_#fff,inset_0_0_0_2px_#000]" />
              <span className="absolute -bottom-[3px] -right-[3px] size-[5px] border border-white bg-black" />
            </td>
            <td colSpan={11} />
          </tr>
          <tr className={clsx("h-[111px]", red)}>
            <RowHead n={78} />
            <td colSpan={7} className={cell}><Lines lines={flow.r78} /></td>
            <td colSpan={11} />
          </tr>
          <tr className="h-[146px]">
            <RowHead n={79} />
            <td className={cell} />
            <td colSpan={7} className={cell} />
            <td colSpan={11} />
          </tr>
        </tbody>
      </table>
      <svg className="pointer-events-none absolute left-[940px] top-[136px]" width="204" height="154" viewBox="0 0 204 154">
        <path d="M194 8 25 132" stroke="#00ff00" strokeWidth="5" strokeLinecap="round" />
        <path d="M8 146 24 120q8 8 9 20z" fill="#00ff00" stroke="#00ff00" strokeLinejoin="round" />
      </svg>
    </div>
  );
}

function VerticalScroll() {
  return (
    <div className="flex w-4 shrink-0 flex-col items-center bg-[#7c9bc8]">
      <div className="flex h-2 w-full items-center justify-center border border-[#7c9bc8] bg-[#f2f7fd]"><span className="h-px w-2 bg-[#6f8fb8]" /></div>
      <svg width="8" height="5" className="mt-[6px]"><path d="M0 5h8L4 0z" fill="#3f5f94" /></svg>
      <div className="grow-[400]" />
      <div className="flex h-[227px] w-[14px] flex-col items-center justify-center gap-[2px] border border-[#4f6c9c] bg-linear-to-r from-[#eef2f8] to-[#bcc9dc]">
        {[0, 1, 2, 3].map((i) => (
          <span key={i} className="h-px w-2 bg-[#66738a]" />
        ))}
      </div>
      <div className="grow-[156]" />
      <svg width="8" height="5" className="mb-[6px]"><path d="M0 0h8L4 5z" fill="#2f4d82" /></svg>
    </div>
  );
}

function SheetTabs() {
  const nav = ["M2 0v8M9 0 4 4l5 4z", "M7 0 2 4l5 4z", "M3 0l5 4-5 4z", "M8 0v8M1 0l5 4-5 4z"];
  return (
    <div className="flex h-[17px] shrink-0 border-b border-[#5e7ba8] bg-linear-to-b from-[#8eaedb] to-[#a3bfe4]">
      <div className="flex w-[63px] items-center justify-center gap-1 bg-[#c9dbf2]">
        {nav.map((d) => (
          <button key={d} aria-label="切换工作表">
            <svg width="10" height="8" viewBox="0 0 10 8" fill="#24498c" stroke="#24498c" strokeWidth="1"><path d={d} /></svg>
          </button>
        ))}
      </div>
      <button className="bg-white px-[9px] text-sm leading-4 text-[#15326b] [clip-path:polygon(0_0,100%_0,88%_100%,0_100%)]">背钻</button>
      <button aria-label="插入工作表" className="-ml-1 flex w-11 items-center justify-center bg-[#d5e3f5] [clip-path:polygon(25%_0,100%_0,75%_100%,0_100%)]">
        <svg width="16" height="13" viewBox="0 0 16 13">
          <path d="M5.500 2.500h9v8h-2v2h-7z" fill="#e9f0fb" stroke="#56719f" />
          <path d="M4 0v8M0 4h8M1 1l6 6M7 1 1 7" stroke="#e0a030" />
        </svg>
      </button>
      <div className="flex-1" />
      <div className="flex w-[777px] shrink-0 items-center bg-[#7c9bc8]">
        <span className="flex h-[14px] w-[7px] items-center justify-center border border-[#b7cbe8] bg-white"><span className="h-2 w-px bg-[#555]" /></span>
        <svg width="5" height="8" className="ml-1"><path d="M5 0v8L0 4z" fill="#2f4d82" /></svg>
        <div className="ml-[57px] flex h-[15px] flex-1 items-center justify-center gap-px border border-[#56739f] bg-linear-to-b from-[#eef2f8] via-[#d5dfec] to-[#a9b9d0]">
          {[0, 1, 2, 3].map((i) => (
            <span key={i} className="h-[7px] w-px bg-[#66738a]" />
          ))}
        </div>
        <svg width="5" height="8" className="ml-[129px]"><path d="M0 0v8l5-4z" fill="#2f4d82" /></svg>
        <span className="ml-2 mr-4 flex h-[14px] w-[7px] items-center justify-center border border-[#b7cbe8] bg-white"><span className="h-2 w-px bg-[#555]" /></span>
      </div>
    </div>
  );
}

function StatusBar() {
  return (
    <div className="flex h-[21px] shrink-0 items-center bg-[linear-gradient(#d9e7fa_0,#c6dbf7_7px,#b2cdf3_8px,#d2e4fb_100%)] text-xs text-[#15326b]">
      <span className="h-full w-[41px] border-r border-[#a3bfe4] pl-[7px] leading-[20px]">就绪</span>
      <div className="ml-auto flex h-full w-[251px] items-center border-l border-[#7b9bcb] bg-linear-to-b from-[#b5d0f5] via-[#84abe2] to-[#a5c5f0]">
        <div className="ml-[5px] flex h-[18px] divide-x divide-[#8fa9cd] border border-[#8fa9cd] bg-[#cfdaea]">
          <button aria-label="普通" className="w-[18px] bg-[#fbd48a] px-[2px]"><svg width="13" height="12" viewBox="0 0 13 12"><path d="M.5.5h12v11H.5zM4.500 0v12M8.500 0v12M0 4.500h13M0 8.500h13" fill="#fff" stroke="#5c6069" /></svg></button>
          <button aria-label="页面布局" className="w-[19px] px-[3px]"><svg width="12" height="12" viewBox="0 0 12 12"><path d="M.5.5h11v11H.5z" fill="#8b929e" stroke="#5c6069" /><path d="M3 2h6v8H3z" fill="#fff" /><path d="M4 4.500h4M4 6.500h4" stroke="#5c6069" /></svg></button>
          <button aria-label="分页预览" className="w-[19px] px-[3px]"><svg width="12" height="12" viewBox="0 0 12 12"><path d="M.5.5h11v11H.5z" fill="#fff" stroke="#5c6069" /><path d="M7.500 0v7h-6M4 1v6" stroke="#5c6069" strokeWidth="1.500" fill="none" /></svg></button>
        </div>
        <span className="ml-2 w-[41px]">115%</span>
        <button aria-label="缩小" className="flex size-[15px] items-center justify-center rounded-full border border-[#53719f] bg-linear-to-b from-white to-[#b9cce8]"><span className="h-[2px] w-2 bg-[#3f5880]" /></button>
        <input
          type="range"
          aria-label="显示比例"
          min={0}
          max={200}
          defaultValue={100}
          className="h-4 min-w-0 flex-1 appearance-none bg-[linear-gradient(#5c7fb4,#5c7fb4)] bg-[length:100%_1px] bg-center bg-no-repeat [&::-webkit-slider-thumb]:h-[13px] [&::-webkit-slider-thumb]:w-[9px] [&::-webkit-slider-thumb]:appearance-none [&::-webkit-slider-thumb]:rounded-b-full [&::-webkit-slider-thumb]:border [&::-webkit-slider-thumb]:border-[#53719f] [&::-webkit-slider-thumb]:bg-[#e6eef9]"
        />
        <button aria-label="放大" className="mr-[5px] flex size-[15px] items-center justify-center rounded-full border border-[#53719f] bg-linear-to-b from-white to-[#b9cce8]">
          <svg width="9" height="9"><path d="M4.500 0v9M0 4.500h9" stroke="#3f5880" strokeWidth="2" /></svg>
        </button>
      </div>
    </div>
  );
}

/* ---------- task bar ---------- */

function Tape() {
  return (
    <svg width="33" height="28" viewBox="0 0 33 28">
      <path d="M2 3 12 1l4 4-9 3z" fill="#3fd0c4" stroke="#0c4f55" />
      <path d="M7 8c2-3 8-4 12-3 8 1 12 5 12 10 1 6-5 11-12 11C10 26 4 22 3 15z" fill="#145f66" />
      <ellipse cx="17" cy="14" rx="12" ry="9" fill="#1fb5a5" />
      <ellipse cx="19" cy="13" rx="8" ry="6" fill="#0b6a5c" stroke="#a9d86e" strokeDasharray="3 2" />
      <ellipse cx="19" cy="13" rx="3.500" ry="3" fill="#2a9c58" stroke="#e7e04d" strokeWidth="1.500" />
      <path d="M6 17q6 7 19 4" stroke="#dff5ef" strokeWidth="1.500" fill="none" strokeDasharray="4 2" />
      <path d="m12 8 4 3M26 8l-4 3M12 19l4-3M27 18l-5-3" stroke="#063c3f" strokeWidth="1.500" />
    </svg>
  );
}

const tasks: { name: string; cls: string; icon: ReactNode }[] = [
  {
    name: "贝壳",
    cls: "w-[58px]",
    icon: (
      <svg width="34" height="30" viewBox="0 0 34 30">
        <path d="M12 28 8 25C3 22 0 17 1 13l2-5 4-4 5-2 6-1 5 1 5 4 3 4 2 5-1 6-4 5-7 4-4 4z" fill="#fcdc94" stroke="#d68a1f" />
        <path d="M14 27 3 13M15 27 8 5M16 27 14 2M18 27 21 3M19 27 28 8M20 27l12-11" stroke="#e79a2f" strokeWidth="1.500" />
        <path d="m22 11 3 6 7 1-5 4 1 7-6-3-6 3 1-7-4-4 6-1z" fill="#ee8a2a" stroke="#b9500b" />
      </svg>
    ),
  },
  {
    name: "记事本",
    cls: "w-[58px]",
    icon: (
      <svg width="26" height="28" viewBox="0 0 26 28">
        <path d="M1 1h24v26H1z" fill="#f4fafe" />
        <path d="M4 5h18M4 9h18M4 13h18M4 17h18M4 21h18M4 25h18" stroke="#4aa3d6" strokeWidth="2" />
      </svg>
    ),
  },
  {
    name: "Genesis",
    cls: "w-[58px]",
    icon: (
      <svg width="28" height="29" viewBox="0 0 28 29">
        <path d="M27 1 14 3C7 5 4 9 3 14L1 24c0 3 2 4 5 4l13-2 4-12h-9l-2 4h4l-1 4-7 1c0-6 1-11 5-13l10-2z" fill="#d92a22" stroke="#7c0f0f" />
      </svg>
    ),
  },
  {
    name: "Total Commander",
    cls: "w-[58px]",
    icon: (
      <svg width="30" height="31" viewBox="0 0 30 31">
        <path d="M0 0h30v31H2l-2-2z" fill="#2545c4" />
        <path d="M7 0h15v10H7z" fill="#c9d0da" />
        <path d="M16 1h4v8h-4z" fill="#1b3390" />
        <path d="M4 13h22v18H4z" fill="#fff" />
        <path d="M6 17h18M6 21h18M6 25h9" stroke="#c44" />
        <text x="15" y="29" fontSize="8" fontWeight="bold" fill="#222">64</text>
      </svg>
    ),
  },
  {
    name: "PCB",
    cls: "w-[58px]",
    icon: (
      <svg width="30" height="30" viewBox="0 0 30 30">
        <path d="M7 10C9 3 24 1 28 9c2 7-3 12-10 11l-3 9h-5l1-9z" fill="#0b9444" />
        <path d="M1 27 6 10M3 1h15M6 1v9h9M15 1v7M20 14l4-2M20 17l5-1" stroke="#0a7a38" strokeWidth="1.500" fill="none" />
      </svg>
    ),
  },
  {
    name: "飞鸽",
    cls: "w-[58px]",
    icon: (
      <span className="flex h-7 w-7 items-center justify-center rounded-md bg-[#1296f3]">
        <svg width="18" height="22" viewBox="0 0 18 22">
          <path d="M3 1c6 2 11 6 12 10 1 3 0 5-2 7l-1 4-2-4-4-2 3-1c-3-1-5-3-5-5l2 .5C4 9 3 7 3 5l1 .5C3 4 3 3 3 1z" fill="#fff" />
        </svg>
      </span>
    ),
  },
  {
    name: "Excel",
    cls: "w-[52px] mr-[5px] from-[#dde8ee]/90! to-[#9fb5c4]/70! shadow-[3px_0_0_#35526f,4px_0_0_#b9cbdc,7px_0_0_#35526f,8px_0_0_#8ba3bd]",
    icon: (
      <svg width="32" height="29" viewBox="0 0 32 29">
        <path d="M2 25V3c9-3 18-3 28 0v22c-9 2-18 2-28 3z" fill="#fff" stroke="#5a9c38" strokeWidth="1.500" />
        <path d="M19 6h9v19h-9zM19 12h9M19 18h9M24 6v19M8 22h11" stroke="#7fb75c" strokeWidth="2" fill="none" />
        <path d="m6 6 10 14M16 6 6 20" stroke="#2e7d1f" strokeWidth="3.500" />
      </svg>
    ),
  },
  {
    name: "Word",
    cls: "w-[54px] mr-[3px] shadow-[3px_0_0_#12305a,4px_0_0_#8ba3bd]",
    icon: (
      <svg width="32" height="29" viewBox="0 0 32 29">
        <path d="M2 25C2 12 5 4 14 1l16 2-2 23-12 2H2z" fill="#fff" stroke="#3a6fb5" strokeWidth="1.500" />
        <path d="M22 8h6M22 12h6M22 16h5M12 22h15" stroke="#7f9fd0" strokeWidth="2" />
        <path d="m8 7 3 12 4-9 3 9 4-12" stroke="#1d4f9e" strokeWidth="2.500" fill="none" />
      </svg>
    ),
  },
  { name: "InCAM", cls: "w-[58px]", icon: <Tape /> },
  {
    name: "XManager",
    cls: "w-[52px] mr-[7px] shadow-[3px_0_0_#12305a,4px_0_0_#8ba3bd,7px_0_0_#12305a,8px_0_0_#60799a]",
    icon: (
      <svg width="32" height="28" viewBox="0 0 32 28">
        <path d="M30 0 3 27" stroke="#fff" strokeWidth="3" />
        <path d="M30 0 3 27" stroke="#222" strokeWidth="1.500" />
        <path d="M1 1h8l21 26h-8z" fill="#8a1191" stroke="#fff" />
      </svg>
    ),
  },
  { name: "InCAM 2", cls: "w-[58px]", icon: <Tape /> },
];

function TaskBar() {
  return (
    <footer className="flex h-10 shrink-0 items-stretch border-t border-[#0b1f3d] bg-[linear-gradient(#8199bb_0,#3d5f8f_4px,#0c2e5f_10px,#062a5c_30px,#04224d_100%)]">
      <button aria-label="开始" className="ml-2 mr-[14px] flex size-[38px] items-center justify-center rounded-full border border-[#86c4e0] bg-[radial-gradient(circle_at_50%_95%,#5fd2ee,#2a6c9f_45%,#14385f_75%)]">
        <svg width="24" height="24" viewBox="0 0 24 24">
          <path d="M4 4q4-3 8 0l-2 8q-4-2-8 0z" fill="#f0602a" />
          <path d="M13 4q4 3 9 0l-2 8q-4 3-9 0z" fill="#8cc63f" />
          <path d="M2 13q4-2 8 0l-2 8q-4-3-8 0z" fill="#3f9fe6" />
          <path d="M11 13q4 3 9 0l-2 8q-4 3-9 0z" fill="#fcc927" />
        </svg>
      </button>
      <div className="flex gap-1">
        {tasks.map((t) => (
          <button
            key={t.name}
            aria-label={t.name}
            className={clsx("flex items-center justify-center rounded-[3px] border border-[#8fa5c2]/70 bg-linear-to-b from-[#7f95b3]/70 to-[#1d3b68]/60", t.cls)}
          >
            {t.icon}
          </button>
        ))}
      </div>
      <div className="ml-auto flex items-center gap-[9px] text-white">
        <svg width="16" height="16" viewBox="0 0 16 16"><path d="M.5 6.500h15v8H.5z" fill="#d9d9d4" stroke="#999" /><path d="M2 9h12M2 11h12M4 13h8" stroke="#555" strokeDasharray="1 1" /><path d="M8 6c0-5 4 0 5-5" stroke="#ccc" fill="none" /></svg>
        <span className="flex size-[15px] items-center justify-center rounded-full border border-[#c6d3ff] bg-[#1b1fb0] text-[11px] font-bold leading-none">?</span>
        <svg width="9" height="18" viewBox="0 0 9 18"><path d="M3.500.5h4v3h-4zM1.500 2.500h4v3h-4z" fill="#123" stroke="#fff" /><path d="M1 13h6l-3 3z" fill="#fff" /></svg>
        <svg width="8" height="4" className="ml-[2px]"><path d="M0 4h8L4 0z" fill="#fff" /></svg>
        <svg width="16" height="16" viewBox="0 0 16 16" className="ml-[3px]"><path d="M1.500 1v14" stroke="#fff" strokeWidth="1.500" /><path d="M3 2c4-1 4 2 8 1v6c-4 1-4-2-8-1z" fill="#fff" /><circle cx="11" cy="11" r="4.500" fill="#d8261c" /><path d="m9 9 4 4M13 9l-4 4" stroke="#fff" strokeWidth="1.500" /></svg>
        <svg width="16" height="14" viewBox="0 0 16 14"><path d="M0 4h3l4-4v14l-4-4H0z" fill="#fff" /><path d="M9 5q2 2 0 4M11 3q4 4 0 8M13.500 1.500q4 5.500 0 11" stroke="#fff" fill="none" /></svg>
        <svg width="16" height="15" viewBox="0 0 16 15"><path d="M4.500 4.500h10v7h-10zM6 14h8" fill="#1c2d48" stroke="#fff" strokeWidth="1.500" /><path d="M1.500 0v3M4.500 0v3M.5 3h5M3 3v4" stroke="#fff" /></svg>
        <time className="ml-[5px] w-[60px] text-center text-xs leading-[18px]">
          <span className="block">20:14</span>
          <span className="block">2023/6/1</span>
        </time>
        <button aria-label="显示桌面" className="h-full w-[14px] border border-[#5d7391] bg-linear-to-br from-[#5b7391] to-[#0d2547]" />
      </div>
    </footer>
  );
}

export default function App() {
  return (
    <div className={clsx("relative flex h-screen flex-col overflow-hidden bg-[#bfdbff]", ui)}>
      <TitleBar />
      <OfficeButton />
      <TabStrip />
      <Ribbon />
      <FormulaBar />
      <main className="flex min-h-0 flex-1">
        <Sheet />
        <VerticalScroll />
      </main>
      <SheetTabs />
      <StatusBar />
      <TaskBar />
    </div>
  );
}
